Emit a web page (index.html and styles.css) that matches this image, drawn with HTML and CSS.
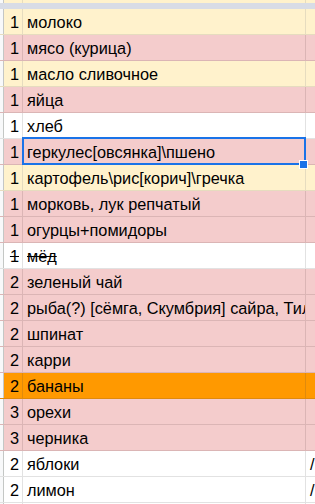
FILE: index.html
```html
<!DOCTYPE html>
<html>
<head>
<meta charset="utf-8">
<title>Список продуктов</title>
<link rel="stylesheet" href="styles.css">
</head>
<body>
  <div class="sheet">
    <div class="row yellow stub"><span class="hdr"></span><span class="num"></span><span class="name"></span><span class="extra"></span></div>
    <div class="freeze"></div>

    <div class="row yellow"><span class="hdr"></span><span class="num">1</span><span class="name">молоко</span><span class="extra"></span></div>
    <div class="row pink"><span class="hdr"></span><span class="num">1</span><span class="name">мясо (курица)</span><span class="extra"></span></div>
    <div class="row yellow"><span class="hdr"></span><span class="num">1</span><span class="name">масло сливочное</span><span class="extra"></span></div>
    <div class="row pink"><span class="hdr"></span><span class="num">1</span><span class="name">яйца</span><span class="extra"></span></div>
    <div class="row"><span class="hdr"></span><span class="num">1</span><span class="name">хлеб</span><span class="extra"></span></div>
    <div class="row pink"><span class="hdr"></span><span class="num">1</span><span class="name selected">геркулес[овсянка]\пшено</span><span class="extra"></span></div>
    <div class="row yellow"><span class="hdr"></span><span class="num">1</span><span class="name">картофель\рис[корич]\гречка</span><span class="extra"></span></div>
    <div class="row pink"><span class="hdr"></span><span class="num">1</span><span class="name">морковь, лук репчатый</span><span class="extra"></span></div>
    <div class="row pink"><span class="hdr"></span><span class="num">1</span><span class="name">огурцы+помидоры</span><span class="extra"></span></div>
    <div class="row done"><span class="hdr"></span><span class="num">1</span><span class="name">мёд</span><span class="extra"></span></div>
    <div class="row pink"><span class="hdr"></span><span class="num">2</span><span class="name">зеленый чай</span><span class="extra"></span></div>
    <div class="row pink"><span class="hdr"></span><span class="num">2</span><span class="name">рыба(?) [сёмга, Скумбрия] сайра, Тилапия</span><span class="extra"></span></div>
    <div class="row pink"><span class="hdr"></span><span class="num">2</span><span class="name">шпинат</span><span class="extra"></span></div>
    <div class="row pink"><span class="hdr"></span><span class="num">2</span><span class="name">карри</span><span class="extra"></span></div>
    <div class="row orange"><span class="hdr"></span><span class="num">2</span><span class="name">бананы</span><span class="extra"></span></div>
    <div class="row pink"><span class="hdr"></span><span class="num">3</span><span class="name">орехи</span><span class="extra"></span></div>
    <div class="row pink"><span class="hdr"></span><span class="num">3</span><span class="name">черника</span><span class="extra"></span></div>
    <div class="row"><span class="hdr"></span><span class="num">2</span><span class="name">яблоки</span><span class="extra">/</span></div>
    <div class="row"><span class="hdr"></span><span class="num">2</span><span class="name">лимон</span><span class="extra">/</span></div>
    <div class="row"><span class="hdr"></span><span class="num"></span><span class="name"></span><span class="extra"></span></div>
  </div>
</body>
</html>
```

FILE: styles.css
```css
html, body {
  margin: 0;
  padding: 0;
  background: #fff;
}

body {
  font-family: "Liberation Sans", Arial, sans-serif;
  font-size: 16.3px;
  color: #000;
  height: 504px;
  overflow: hidden;
}

.sheet {
  width: 315px;
  overflow: hidden;
}

/* one spreadsheet row: row header edge, count, product, next column */
.row {
  --line: #e2e2e2;
  display: grid;
  grid-template-columns: 4px 19px 283px 1fr;
  height: 26px;
  box-sizing: border-box;
  border-bottom: 1px solid var(--line);
  background: #fff;
}

.row > span {
  box-sizing: border-box;
  border-right: 1px solid var(--line);
  display: flex;
  align-items: flex-end;
  line-height: 20px;
  padding-bottom: 2px;
  white-space: nowrap;
  overflow: hidden;
}

.row .hdr {
  background: #f8f9fa;
  border-right-color: #c4c7c5;
}

.num {
  justify-content: flex-end;
  padding-right: 3px;
}

.name {
  padding-left: 4px;
}

.extra {
  padding-left: 4px;
  border-right: none !important;
}

.yellow { background: #fff2cc; --line: #e6dcbf; }
.pink   { background: #f4cccc; --line: #dbb5b5; }
.orange { background: #ff9900; --line: #e08a0c; }

.stub {
  height: 3px;
  border-bottom: none;
}

.stub > span {
  padding: 0;
}

/* frozen rows divider */
.freeze {
  height: 6px;
  background: #d8dce6;
}

.done .num,
.done .name {
  text-decoration: line-through;
}

/* active cell frame and fill handle */
.row .selected {
  position: relative;
  overflow: visible;
}

.selected::after {
  content: "";
  position: absolute;
  left: -1px;
  top: -2px;
  right: -1px;
  bottom: -1px;
  border: 2px solid #1a73e8;
  pointer-events: none;
}

.selected::before {
  content: "";
  position: absolute;
  right: -3px;
  bottom: -5px;
  width: 7px;
  height: 7px;
  background: #1a73e8;
  border: 1px solid #fff;
  z-index: 1;
}
```
